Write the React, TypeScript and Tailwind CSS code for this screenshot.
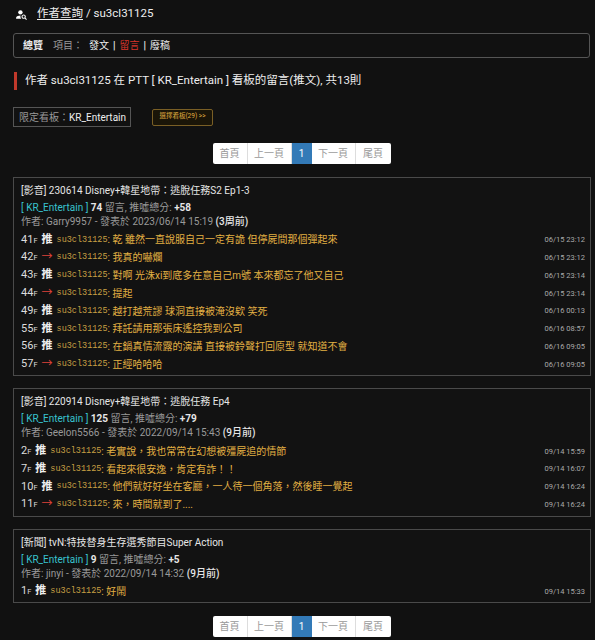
import { MdPersonSearch } from 'react-icons/md';

interface Comment {
	floor: number;
	tag: '推' | '→';
	text: string;
	time: string;
}

interface Post {
	kind: string;
	title: string;
	count: number;
	score: string;
	author: string;
	date: string;
	ago: string;
	comments: Comment[];
}

const posts: Post[] = [
	{
		kind: '影音',
		title: '230614 Disney+韓星地帶：逃脫任務S2 Ep1-3',
		count: 74,
		score: '+58',
		author: 'Garry9957',
		date: '2023/06/14 15:19',
		ago: '(3周前)',
		comments: [
			{ floor: 41, tag: '推', text: '乾 雖然一直說服自己一定有詭 但停屍間那個彈起來', time: '06/15 23:12' },
			{ floor: 42, tag: '→', text: '我真的嚇爛', time: '06/15 23:12' },
			{ floor: 43, tag: '推', text: '對啊 光洙xi到底多在意自己m號 本來都忘了他又自己', time: '06/15 23:14' },
			{ floor: 44, tag: '→', text: '提起', time: '06/15 23:14' },
			{ floor: 49, tag: '推', text: '越打越荒謬 球洞直接被淹沒欸 笑死', time: '06/16 00:13' },
			{ floor: 55, tag: '推', text: '拜託請用那張床遙控我到公司', time: '06/16 08:57' },
			{ floor: 56, tag: '推', text: '在鍋真情流露的演講 直接被鈴聲打回原型 就知道不會', time: '06/16 09:05' },
			{ floor: 57, tag: '→', text: '正經哈哈哈', time: '06/16 09:05' }
		]
	},
	{
		kind: '影音',
		title: '220914 Disney+韓星地帶：逃脫任務 Ep4',
		count: 125,
		score: '+79',
		author: 'Geelon5566',
		date: '2022/09/14 15:43',
		ago: '(9月前)',
		comments: [
			{ floor: 2, tag: '推', text: '老實說，我也常常在幻想被殭屍追的情節', time: '09/14 15:59' },
			{ floor: 7, tag: '推', text: '看起來很安逸，肯定有詐！！', time: '09/14 16:07' },
			{ floor: 10, tag: '推', text: '他們就好好坐在客廳，一人待一個角落，然後睡一覺起', time: '09/14 16:24' },
			{ floor: 11, tag: '→', text: '來，時間就到了....', time: '09/14 16:24' }
		]
	},
	{
		kind: '新聞',
		title: 'tvN:特技替身生存選秀節目Super Action',
		count: 9,
		score: '+5',
		author: 'jinyi',
		date: '2022/09/14 14:32',
		ago: '(9月前)',
		comments: [{ floor: 1, tag: '推', text: '好鬧', time: '09/14 15:33' }]
	}
];

function Pager() {
	return (
		<div className="flex justify-center pl-[8px]">
			<div className="flex h-[21px] bg-white text-[10px] text-[#999] rounded-[2px] overflow-hidden">
				<div className="w-[35px] flex items-center justify-center border-r border-[#ddd]">首頁</div>
				<div className="w-[44px] flex items-center justify-center border-r border-[#ddd]">上一頁</div>
				<div className="w-[20px] flex items-center justify-center bg-[#337ab7] text-white">1</div>
				<div className="w-[44px] flex items-center justify-center border-r border-[#ddd]">下一頁</div>
				<div className="w-[35px] flex items-center justify-center">尾頁</div>
			</div>
		</div>
	);
}

function PostCard({ post }: { post: Post }) {
	return (
		<div className="ml-[13px] mr-[4px] border border-[#4a4a4a] bg-[#121212] pl-[7px] pr-[5px] pt-[5px] pb-[2px]">
			<div className="text-[10px] leading-[16px] text-[#e6e6e6]">
				[{post.kind}] {post.title}
			</div>
			<div className="mt-[2px] text-[10px] leading-[14px]">
				<span className="text-[#38c3cf]">[ KR_Entertain ]</span>
				<span className="font-bold text-[#e6e6e6]"> {post.count}</span>
				<span className="text-[#999]"> 留言, 推噓總分: </span>
				<span className="font-bold text-[#e6e6e6]">{post.score}</span>
			</div>
			<div className="text-[10px] leading-[13px] text-[#999]">
				作者: {post.author} - 發表於 {post.date} <span className="text-[#e6e6e6] font-medium">{post.ago}</span>
			</div>
			<div className="mt-[3px]">
				{post.comments.map(c => (
					<div key={c.floor} className="flex items-center h-[17.8px] whitespace-nowrap">
						<span className="text-[11px] text-[#ddd]">
							{c.floor}
							<span className="text-[7.5px]">F</span>
						</span>
						{c.tag === '推' ? (
							<span className="ml-[4px] text-[11px] font-bold text-[#eee]">推</span>
						) : (
							<span className="ml-[4px] text-[11px] text-[#e0433a]">→</span>
						)}
						<span className="ml-[4px] font-['Liberation_Mono',monospace] text-[8.5px] text-[#c9a044]">su3cl31125</span>
						<span className="text-[10px] text-[#e2b043]">: {c.text}</span>
						<span className="ml-auto text-[7.5px] text-[#aaa]">{c.time}</span>
					</div>
				))}
			</div>
		</div>
	);
}

export default function App() {
	return (
		<div className="min-h-screen w-full bg-[#111] text-[#ddd] font-['Roboto','Noto_Sans_CJK_TC',sans-serif] pb-[4px]">
			<div className="h-[28px] flex items-center pl-[15px] text-[11.5px] text-[#eee]">
				<MdPersonSearch className="w-[13px] h-[13px] text-white" />
				<span className="ml-[9px] underline underline-offset-2">作者查詢</span>
				<span className="ml-[3px]">/ su3cl31125</span>
			</div>

			<div className="mt-[5px] ml-[13px] mr-[5px] h-[25px] border border-[#555] rounded-[3px] flex items-center pl-[9px] text-[10px]">
				<span className="font-bold text-[#eee]">總覽</span>
				<span className="ml-[10px] text-[#999]">項目：</span>
				<span className="ml-[6px] text-[#eee]">發文</span>
				<span className="mx-[4px] text-[#eee] font-bold">|</span>
				<span className="text-[#d8342a]">留言</span>
				<span className="mx-[4px] text-[#eee] font-bold">|</span>
				<span className="text-[#eee]">廢稿</span>
			</div>

			<div className="mt-[14px] ml-[14px] h-[18px] flex items-center">
				<div className="w-[3px] h-[18px] bg-[#c0392b]" />
				<div className="ml-[8px] text-[11.5px] text-[#eee]">
					作者 su3cl31125 在 PTT [ KR_Entertain ] 看板的留言(推文), 共13則
				</div>
			</div>

			<div className="mt-[17px] ml-[13px] flex items-center">
				<div className="h-[20px] w-[118px] border border-[#555] flex items-center pl-[5px] text-[10px]">
					<span className="text-[#999]">限定看板：</span>
					<span className="text-[#eee]">KR_Entertain</span>
				</div>
				<div className="ml-[21px] h-[17px] w-[61px] border border-[#7a5f25] rounded-[2px] bg-[#1a1508] flex items-center justify-center text-[6.5px] text-[#e0b040]">
					選擇看板(29) &gt;&gt;
				</div>
			</div>

			<div className="mt-[16px]">
				<Pager />
			</div>

			<div className="mt-[13px] flex flex-col gap-[12px]">
				{posts.map(p => (
					<PostCard key={p.title} post={p} />
				))}
			</div>

			<div className="mt-[13px]">
				<Pager />
			</div>
		</div>
	);
}
